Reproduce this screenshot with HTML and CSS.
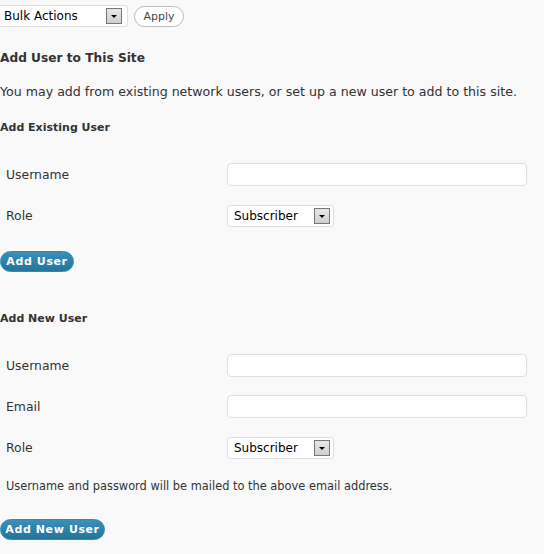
FILE: index.html
```html
<!DOCTYPE html>
<html>
<head>
<meta charset="utf-8">
<link rel="stylesheet" href="styles.css">
</head>
<body>
<div class="tablenav">
  <div class="select bulk"><span>Bulk Actions</span><span class="arrow"></span></div>
  <button class="btn-sec">Apply</button>
</div>
<h2 class="title">Add User to This Site</h2>
<p class="intro">You may add from existing network users, or set up a new user to add to this site.</p>

<h3 class="sub first">Add Existing User</h3>
<div class="form">
  <div class="row"><label>Username</label><div class="input"></div></div>
  <div class="row"><label>Role</label><div class="select role"><span>Subscriber</span><span class="arrow"></span></div></div>
</div>
<button class="btn-primary b1">Add User</button>

<h3 class="sub second">Add New User</h3>
<div class="form">
  <div class="row"><label>Username</label><div class="input"></div></div>
  <div class="row"><label>Email</label><div class="input"></div></div>
  <div class="row"><label>Role</label><div class="select role"><span>Subscriber</span><span class="arrow"></span></div></div>
</div>
<p class="note">Username and password will be mailed to the above email address.</p>
<button class="btn-primary b2">Add New User</button>
</body>
</html>
```
FILE: styles.css
```css
html, body { margin: 0; padding: 0; }
body {
  background: #f9f9f9;
  color: #333;
  font-family: "DejaVu Sans", Verdana, sans-serif;
  font-size: 12.4px;
  width: 544px;
  height: 554px;
  overflow: hidden;
}
.tablenav {
  display: flex;
  align-items: center;
  gap: 6px;
  padding-top: 5px;
  height: 22px;
}
.select {
  box-sizing: border-box;
  height: 22px;
  background: #fff;
  border: 1px solid #dfdfdf;
  border-radius: 3px;
  display: flex;
  align-items: center;
  justify-content: space-between;
  padding: 0 3px 0 6px;
  font-size: 12px;
  color: #000;
}
.bulk { width: 128px; padding-left: 4px; padding-right: 5px; border-left: none; border-radius: 0 3px 3px 0; }
.role { width: 107px; }
.arrow {
  box-sizing: border-box;
  width: 16px;
  height: 16px;
  border: 1px solid #777;
  background: linear-gradient(#e8e8e8, #cfcfcf);
  position: relative;
}
.arrow::after {
  content: "";
  position: absolute;
  left: 4px;
  top: 6px;
  border-left: 3px solid transparent;
  border-right: 3px solid transparent;
  border-top: 3px solid #000;
}
.btn-sec {
  box-sizing: border-box;
  height: 21px;
  width: 50px;
  border: 1px solid #bbb;
  border-radius: 11px;
  background: #fff;
  font-family: inherit;
  font-size: 11px;
  color: #464646;
  padding: 0;
}
.title {
  font-size: 12.2px;
  font-weight: bold;
  margin: 22px 0 0;
  line-height: 18px;
}
.intro {
  margin: 16px 0 0;
  line-height: 17px;
  font-size: 12.6px;
}
.sub {
  font-size: 11px;
  font-weight: bold;
  line-height: 15px;
  margin: 0;
}
.sub.first { margin-top: 20px; }
.sub.second { margin-top: 39px; }
.form {
  display: flex;
  flex-direction: column;
  gap: 18px;
  margin-top: 28px;
}
.row {
  display: grid;
  grid-template-columns: 227px 300px;
  align-items: center;
  height: 23px;
}
.row label { padding-left: 6px; font-size: 12.4px; }
.input {
  box-sizing: border-box;
  height: 23px;
  background: #fff;
  border: 1px solid #dfdfdf;
  border-radius: 4px;
}
.btn-primary {
  display: block;
  box-sizing: border-box;
  height: 21px;
  border: 1px solid #298cba;
  border-radius: 11px;
  background: linear-gradient(#3b8fb8, #21759b);
  color: #fff;
  font-family: inherit;
  font-weight: bold;
  font-size: 11px;
  letter-spacing: 0.6px;
  padding: 0;
  margin: 0;
  white-space: nowrap;
  text-align: center;
}
.b1 { margin-top: 24px; width: 74px; }
.b2 { margin-top: 25px; width: 105px; }
.note {
  font-size: 11.4px;
  margin: 20px 0 0;
  padding-left: 6px;
  line-height: 15px;
}
```
